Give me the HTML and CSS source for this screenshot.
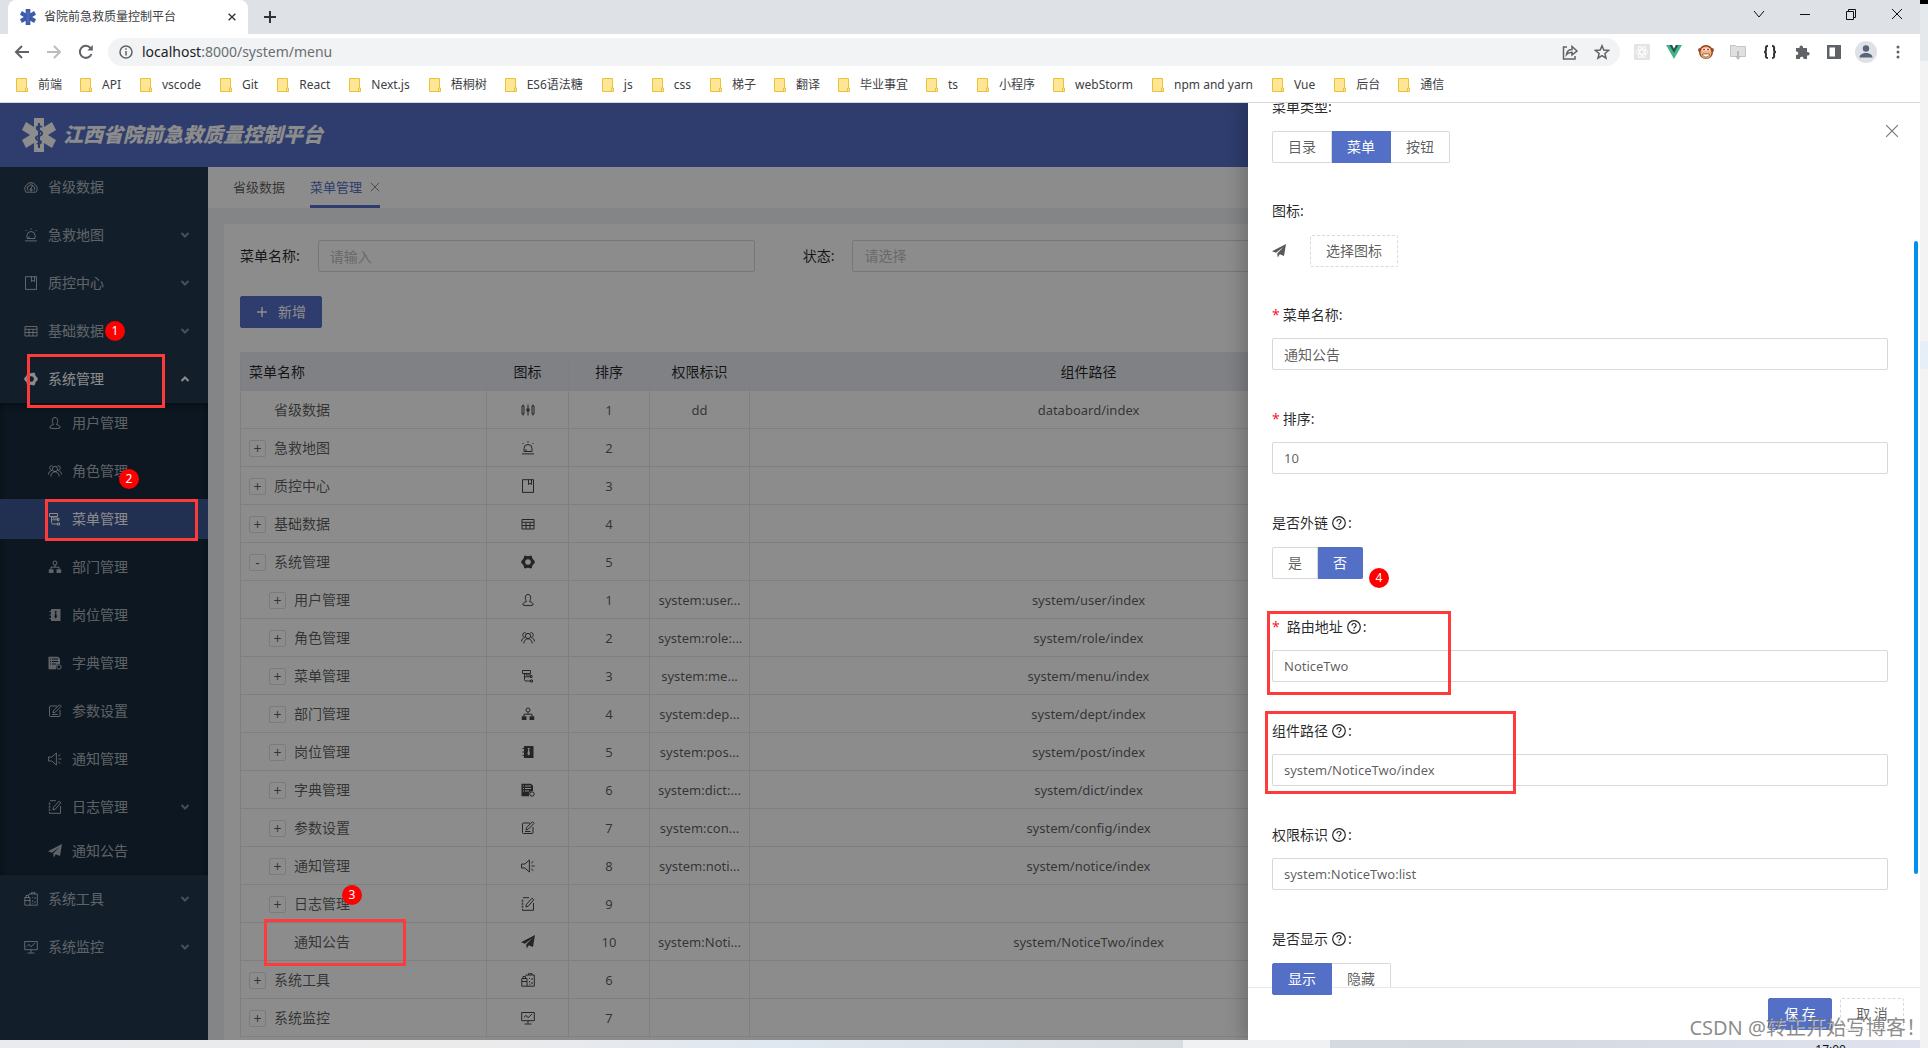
FILE: index.html
```
<!DOCTYPE html>
<html lang="zh-CN">
<head>
<meta charset="utf-8">
<title>省院前急救质量控制平台</title>
<link rel="stylesheet" href="styles.css">
</head>
<body>
<svg class="sprite" aria-hidden="true">
  <symbol id="i-star" viewBox="0 0 34 34"><path fill="currentColor" d="M12 0h10v9l8-5 4 8-8 5 8 5-4 8-8-5v9H12v-9l-8 5-4-8 8-5-8-5 4-8 8 5z"/><path class="snake" d="M17 5v25M20 9c-3-2-6 0-5 2s6 2 5 5-6 1-6 4 5 2 5 4-3 2-4 1"/></symbol>
  <symbol id="i-gauge" viewBox="0 0 14 14"><path d="M2 12.2A6 6 0 1 1 12 12.2zM4 10.500a3.600 3.600 0 1 1 6 0M6.400 9.500l2.200-4M7 9a1 1 0 1 0 .1 0M3.500 6.500l.6.400M7 3.500v.800"/></symbol>
  <symbol id="i-candle" viewBox="0 0 14 14"><path d="M1 3h2v8H1zM11 3h2v8h-2zM2 1.500V3M2 11v1.500M12 1.500V3M12 11v1.500M7 1.500v11"/><path class="solid" d="M5.500 5.500h3v3h-3z"/></symbol>
  <symbol id="i-alert" viewBox="0 0 14 14"><path d="M3 10.500V7.500a4 4 0 0 1 8 0v3zM1 12.900h12M7 .2v1.500M1.500 2l1 1M12.500 2l-1 1M5 10.500V8.200"/></symbol>
  <symbol id="i-book" viewBox="0 0 14 14"><path d="M1.500.700h11v12.700h-11zM7.500.700v4.800L9 4.300l1.500 1.200V.700"/></symbol>
  <symbol id="i-table" viewBox="0 0 14 14"><path d="M1 2.500h12v9.500H1zM1 5.300h12M1 8.500h12M5 5.300V12M9 5.300V12"/></symbol>
  <symbol id="i-gear" viewBox="0 0 14 14"><path class="solid" fill-rule="evenodd" d="M4 .5l3 .8 3-.8 1 .9.5 2.400L13.700 6v2l-2.200 2.200-.5 2.400-1 .9-3-.8-3 .8-1-.9-.5-2.400L.3 8V6l2.200-2.200L3 1.400zM7 4.200a2.800 2.800 0 1 0 0 5.600 2.800 2.800 0 0 0 0-5.600z"/></symbol>
  <symbol id="i-user" viewBox="0 0 14 14"><path d="M5.500 8.500C3.700 6 3.800 1.500 7 1.500S10.300 6 8.500 8.500C11 9.300 12 9.800 12 12c-2 .8-8 .8-10 0 0-2.200 1-2.700 3.500-3.500z"/></symbol>
  <symbol id="i-team" viewBox="0 0 14 14"><circle cx="7" cy="5" r="2.600"/><path d="M2.800 12.500c0-2.800 1.700-4.300 4.200-4.800 2.500.5 4.200 2 4.200 4.800M4.800 2.200C2.800.8.8 3 2.300 5.500c.3.500.8.900 1.500 1C1.500 7.300.5 8.500.5 10.500M9.200 2.200c2-1.400 4 .8 2.500 3.300-.3.500-.8.900-1.500 1 2.300.8 3.300 2 3.300 4"/></symbol>
  <symbol id="i-tree" viewBox="0 0 14 14"><path d="M1.500 1.500h8v3h-8zM3.500 4.500V10.500A1.500 1.500 0 0 0 5 12h4.500M3.500 7.800h6"/><path d="M9.500 6.500h1.500v2H9.500zM9.500 11h2v2h-2zM5 4.500V6h5"/></symbol>
  <symbol id="i-dept" viewBox="0 0 14 14"><circle cx="7" cy="3" r="2"/><path d="M7 5v2.200M3 9V7.200h8V9"/><path class="solid" d="M.8 9.200h4.700v3.800H.8zM8.500 9.200h4.700v3.800H8.500z"/></symbol>
  <symbol id="i-post" viewBox="0 0 14 14"><path class="solid" fill-rule="evenodd" d="M3 1h9.500v12H3v-2H1.500v-1H3V7.500H1.500v-1H3V4H1.500V3H3zM6.500 3l.8 1.500-.9 4.500 1.300 1.500L9 9l-.9-4.500L9 3z"/></symbol>
  <symbol id="i-dict" viewBox="0 0 14 14"><path class="solid" fill-rule="evenodd" d="M.5.800H10l2 2V8h-2l-2 2v3.200H.5zM2 2.500v1h1v-1zM4 2.500v1h6v-1zM2 5v1h1V5zM4 5v1h6V5zM2 7.500v1h1v-1zM4 7.500v1h4v-1z"/><circle cx="11" cy="11" r="2.200"/></symbol>
  <symbol id="i-edit" viewBox="0 0 14 14"><path d="M9 2H2.500a1 1 0 0 0-1 1v8.500a1 1 0 0 0 1 1H11a1 1 0 0 0 1-1V6M5 9l.5-2.500L11.500.800l1.500 1.500L7.500 8zM4 10.500h5.500"/></symbol>
  <symbol id="i-sound" viewBox="0 0 14 14"><path d="M.6 5h3.200L8.400 1v12L3.800 9H.6zM10.500 7H13.500M10.300 4l2-1.500M10.300 10l2 1.500"/></symbol>
  <symbol id="i-log" viewBox="0 0 14 14"><path d="M8 .7H2M1.500 2.500v1M1.500 5.500v1M1.500 8.500v1M1.500 11.800v1.500h11V6M.5 4h2M.5 7h2M.5 10h2M5 10l.4-2.600L11 1.200l1.800 1.600L7.400 9z"/></symbol>
  <symbol id="i-send" viewBox="0 0 14 14"><path class="solid" d="M14 0L12 12 7.800 10.200 5.800 13.500 5.200 9.500 11.500 3 4 8.700 0 7.200z"/></symbol>
  <symbol id="i-tool" viewBox="0 0 14 14"><path d="M.8 5.500H6v7.700H.8zM.8 8.500H6M2 5.500V3.500h2.500v2M5 3V2h8.300v11.200H6M7.500 2V.7H11V2M8.500 5v1M11 5v2M8.500 8v1.500M11 9v2M8.500 11.300h1"/></symbol>
  <symbol id="i-monitor" viewBox="0 0 14 14"><path d="M.7 1.500h12.600v8.200H.7zM7 9.700v3M3.500 13h7M3 6.300l2-2 2 2.500 4-3.800"/></symbol>
  <symbol id="i-help" viewBox="0 0 14 14"><circle cx="7" cy="7" r="6.300"/><path d="M5 5.500C5 2.800 9 2.900 9 5.400 9 7 7 6.900 7 8.500M7 9.700v1.200"/></symbol>
  <symbol id="i-down" viewBox="0 0 10 10"><path class="thick" d="M1.500 3L5 6.500 8.500 3"/></symbol>
  <symbol id="i-up" viewBox="0 0 10 10"><path class="thick" d="M1.500 7L5 3.500 8.500 7"/></symbol>
  <symbol id="i-x" viewBox="0 0 12 12"><path d="M1 1l10 10M11 1L1 11"/></symbol>
  <symbol id="i-folder" viewBox="0 0 12 14"><path fill="#ffe694" stroke="#e8c23c" d="M.5.500h10v9.500h1v3.500H.5zM9.500 13.500v-3.500h1"/></symbol>
</svg>

<div class="desktop">
<div class="window">
  <header class="chrome">
    <div class="tabstrip">
      <div class="tab">
        <svg class="s16 favicon"><use href="#i-star"/></svg>
        <span class="tab-title">省院前急救质量控制平台</span>
        <button class="plain" aria-label="关闭标签页"><svg class="ic s8 bold"><use href="#i-x"/></svg></button>
      </div>
      <button class="plain newtab" aria-label="新标签页"><svg class="ic s12 bold" viewBox="0 0 12 12"><path d="M6 0v12M0 6h12"/></svg></button>
      <div class="winctl">
        <button class="plain" aria-label="搜索标签页"><svg class="ic s12" viewBox="0 0 12 12"><path d="M1 3l5 6 5-6"/></svg></button>
        <button class="plain" aria-label="最小化"><svg class="ic s12" viewBox="0 0 12 12"><path d="M1 6.500h10"/></svg></button>
        <button class="plain" aria-label="还原"><svg class="ic s12" viewBox="0 0 12 12"><path d="M1.500 3.500h7v8h-7zM3.500 3.500v-2h7v8h-2"/></svg></button>
        <button class="plain" aria-label="关闭"><svg class="ic s12"><use href="#i-x"/></svg></button>
      </div>
    </div>
    <div class="toolbar">
      <button class="plain tb" aria-label="后退"><svg class="ic s16 bold" viewBox="0 0 16 16"><path d="M15 8H2M8 2L2 8l6 6"/></svg></button>
      <button class="plain tb off" aria-label="前进"><svg class="ic s16 bold" viewBox="0 0 16 16"><path d="M1 8h13M8 2l6 6-6 6"/></svg></button>
      <button class="plain tb" aria-label="刷新"><svg class="ic s16 bold" viewBox="0 0 16 16"><path d="M13.500 10A6 6 0 1 1 12.500 4"/><path class="solid" d="M14.800 1v5.500H9.300z"/></svg></button>
      <div class="omnibox">
        <svg class="ic s14 mid" viewBox="0 0 14 14"><circle cx="7" cy="7" r="6"/><path d="M7 6v4.500M7 3.300v1.400"/></svg>
        <a class="url" href="#"><b>localhost</b>:8000/system/menu</a>
        <button class="plain tb" aria-label="分享"><svg class="ic s16 mid" viewBox="0 0 16 16"><path d="M5 3H1.500v12H13v-3M4.500 10.500C5 7 7 5.500 10 5.500V2.500l5 4.500-5 4V8.200c-2.500 0-4 .5-5.500 2.300z"/></svg></button>
        <button class="plain tb" aria-label="收藏"><svg class="ic s16 mid" viewBox="0 0 16 16"><path d="M8 1.800l1.800 4.300 4.700.400-3.600 3 1.100 4.600L8 11.700l-4 2.400 1.100-4.600-3.600-3 4.700-.4z"/></svg></button>
      </div>
      <div class="exts">
        <button class="plain tb" aria-label="React"><svg class="s16" viewBox="0 0 16 16"><path fill="#e4e4e4" d="M0 0h16v16H0z"/><g fill="none" stroke="#fff"><ellipse cx="8" cy="8" rx="6" ry="2.300"/><ellipse cx="8" cy="8" rx="6" ry="2.300" transform="rotate(60 8 8)"/><ellipse cx="8" cy="8" rx="6" ry="2.300" transform="rotate(120 8 8)"/></g></svg></button>
        <button class="plain tb" aria-label="Vue"><svg class="s16" viewBox="0 0 16 16"><path fill="#41b883" d="M0 1h6l2 4 2-4h6L8 15z"/><path fill="#35495e" d="M3.500 1H6l2 4 2-4h2.500L8 9z"/></svg></button>
        <button class="plain tb" aria-label="Tampermonkey"><svg class="s16" viewBox="0 0 16 16"><circle cx="2" cy="6" r="2" fill="#a4552c"/><circle cx="14" cy="6" r="2" fill="#a4552c"/><circle cx="8" cy="8" r="7" fill="#8f431f"/><ellipse cx="8" cy="8.500" rx="5.500" ry="6" fill="#f2b47c"/><circle cx="6" cy="5.500" r="1.800" fill="#fff"/><circle cx="10" cy="5.500" r="1.800" fill="#fff"/><circle cx="6" cy="5.500" r="1" fill="#c11"/><circle cx="10" cy="5.500" r="1" fill="#c11"/><path fill="#fff" stroke="#5a2a10" stroke-width=".6" d="M4.500 10h7c0 4-7 4-7 0z"/></svg></button>
        <button class="plain tb" aria-label="下载"><svg class="s16" viewBox="0 0 16 16"><path fill="#e0e0e0" stroke="#c4c4c4" d="M.5 1.500h5l1 1h9v10H.5z"/><path fill="#bbb" d="M7 7h2v5h2l-3 4-3-4h2z"/></svg></button>
        <button class="plain tb" aria-label="JSON"><svg class="ic s16 dark" viewBox="0 0 16 16"><path d="M6 2C3 2 4 4 4 6c0 1-.5 2-2 2 1.500 0 2 1 2 2 0 2-1 4 2 4M10 2c3 0 2 2 2 4 0 1 .5 2 2 2-1.500 0-2 1-2 2 0 2 1 4-2 4"/></svg></button>
        <button class="plain tb" aria-label="扩展程序"><svg class="ic s16" viewBox="0 0 16 16"><path class="solid" d="M2 4h3.500C5 .5 9.500.500 9 4h4v4c3.500-.5 3.500 4 0 3.500V15H9.500c.5-3-4-3-3.500 0H2v-4c3 .5 3-4 0-3.500z"/></svg></button>
        <button class="plain tb" aria-label="侧边栏"><svg class="ic s16" viewBox="0 0 16 16"><path class="solid" fill-rule="evenodd" d="M1 1h14v14H1zM3.500 3.500v9H9v-9z"/></svg></button>
        <button class="plain tb" aria-label="用户"><svg class="s22" viewBox="0 0 22 22"><circle cx="11" cy="11" r="11" fill="#dee1e6"/><g fill="#59637a"><circle cx="11" cy="7.500" r="3.200"/><path d="M4.500 16.500c0-6 13-6 13 0z"/></g></svg></button>
        <button class="plain tb" aria-label="菜单"><svg class="s16" viewBox="0 0 16 16" fill="#5f6368"><circle cx="8" cy="3" r="1.500"/><circle cx="8" cy="8" r="1.500"/><circle cx="8" cy="13" r="1.500"/></svg></button>
      </div>
    </div>
    <nav class="bookmarks">
      <a href="#"><svg><use href="#i-folder"/></svg>前端</a>
      <a class="en" href="#"><svg><use href="#i-folder"/></svg>API</a>
      <a class="en" href="#"><svg><use href="#i-folder"/></svg>vscode</a>
      <a class="en" href="#"><svg><use href="#i-folder"/></svg>Git</a>
      <a class="en" href="#"><svg><use href="#i-folder"/></svg>React</a>
      <a class="en" href="#"><svg><use href="#i-folder"/></svg>Next.js</a>
      <a href="#"><svg><use href="#i-folder"/></svg>梧桐树</a>
      <a class="en" href="#"><svg><use href="#i-folder"/></svg>ES6语法糖</a>
      <a class="en" href="#"><svg><use href="#i-folder"/></svg>js</a>
      <a class="en" href="#"><svg><use href="#i-folder"/></svg>css</a>
      <a href="#"><svg><use href="#i-folder"/></svg>梯子</a>
      <a href="#"><svg><use href="#i-folder"/></svg>翻译</a>
      <a href="#"><svg><use href="#i-folder"/></svg>毕业事宜</a>
      <a class="en" href="#"><svg><use href="#i-folder"/></svg>ts</a>
      <a href="#"><svg><use href="#i-folder"/></svg>小程序</a>
      <a class="en" href="#"><svg><use href="#i-folder"/></svg>webStorm</a>
      <a class="en" href="#"><svg><use href="#i-folder"/></svg>npm and yarn</a>
      <a class="en" href="#"><svg><use href="#i-folder"/></svg>Vue</a>
      <a href="#"><svg><use href="#i-folder"/></svg>后台</a>
      <a href="#"><svg><use href="#i-folder"/></svg>通信</a>
    </nav>
  </header>

  <div class="app">
    <div class="brand">
      <svg class="logo"><use href="#i-star"/></svg>
      <h1>江西省院前急救质量控制平台</h1>
    </div>
    <div class="layout">
      <nav class="sider">
        <a class="item" href="#"><svg class="ic s14"><use href="#i-gauge"/></svg>省级数据</a>
        <a class="item" href="#"><svg class="ic s14"><use href="#i-alert"/></svg>急救地图<svg class="ic s10 arrow"><use href="#i-down"/></svg></a>
        <a class="item" href="#"><svg class="ic s14"><use href="#i-book"/></svg>质控中心<svg class="ic s10 arrow"><use href="#i-down"/></svg></a>
        <a class="item" href="#"><svg class="ic s14"><use href="#i-table"/></svg>基础数据<svg class="ic s10 arrow"><use href="#i-down"/></svg></a>
        <a class="item open" href="#"><svg class="ic s14"><use href="#i-gear"/></svg>系统管理<svg class="ic s10 arrow"><use href="#i-up"/></svg></a>
        <div class="sub">
          <a class="item" href="#"><svg class="ic s14"><use href="#i-user"/></svg>用户管理</a>
          <a class="item" href="#"><svg class="ic s14"><use href="#i-team"/></svg>角色管理</a>
          <a class="item selected" href="#"><svg class="ic s14"><use href="#i-tree"/></svg>菜单管理</a>
          <a class="item" href="#"><svg class="ic s14"><use href="#i-dept"/></svg>部门管理</a>
          <a class="item" href="#"><svg class="ic s14"><use href="#i-post"/></svg>岗位管理</a>
          <a class="item" href="#"><svg class="ic s14"><use href="#i-dict"/></svg>字典管理</a>
          <a class="item" href="#"><svg class="ic s14"><use href="#i-edit"/></svg>参数设置</a>
          <a class="item" href="#"><svg class="ic s14"><use href="#i-sound"/></svg>通知管理</a>
          <a class="item tight" href="#"><svg class="ic s14"><use href="#i-log"/></svg>日志管理<svg class="ic s10 arrow"><use href="#i-down"/></svg></a>
          <a class="item tight" href="#"><svg class="ic s14"><use href="#i-send"/></svg>通知公告</a>
        </div>
        <a class="item" href="#"><svg class="ic s14"><use href="#i-tool"/></svg>系统工具<svg class="ic s10 arrow"><use href="#i-down"/></svg></a>
        <a class="item" href="#"><svg class="ic s14"><use href="#i-monitor"/></svg>系统监控<svg class="ic s10 arrow"><use href="#i-down"/></svg></a>
      </nav>

      <main class="main">
        <div class="pagetabs">
          <a class="ptab" href="#">省级数据</a>
          <a class="ptab active" href="#">菜单管理<svg class="ic s10"><use href="#i-x"/></svg></a>
        </div>
        <section class="card">
          <form class="search">
            <div class="field"><label for="q-name">菜单名称:</label><input id="q-name" class="box" placeholder="请输入"></div>
            <div class="field"><label for="q-status">状态:</label><select id="q-status" class="box"><option>请选择</option></select></div>
          </form>
          <button class="btn primary add"><svg class="ic s12 mid" viewBox="0 0 12 12"><path d="M6 1v10M1 6h10"/></svg>新增</button>
          <table class="grid">
            <colgroup><col class="c-name"><col class="c-icon"><col class="c-sort"><col class="c-perm"><col><col class="c-rest"></colgroup>
            <thead><tr><th>菜单名称</th><th>图标</th><th>排序</th><th>权限标识</th><th>组件路径</th><th></th></tr></thead>
            <tbody>
              <tr><td><span class="leaf">省级数据</span></td><td><svg class="ic s14"><use href="#i-candle"/></svg></td><td>1</td><td>dd</td><td>databoard/index</td><td></td></tr>
              <tr><td><button class="exp">+</button>急救地图</td><td><svg class="ic s14"><use href="#i-alert"/></svg></td><td>2</td><td></td><td></td><td></td></tr>
              <tr><td><button class="exp">+</button>质控中心</td><td><svg class="ic s14"><use href="#i-book"/></svg></td><td>3</td><td></td><td></td><td></td></tr>
              <tr><td><button class="exp">+</button>基础数据</td><td><svg class="ic s14"><use href="#i-table"/></svg></td><td>4</td><td></td><td></td><td></td></tr>
              <tr><td><button class="exp">-</button>系统管理</td><td><svg class="ic s14"><use href="#i-gear"/></svg></td><td>5</td><td></td><td></td><td></td></tr>
              <tr class="lv1"><td><button class="exp">+</button>用户管理</td><td><svg class="ic s14"><use href="#i-user"/></svg></td><td>1</td><td>system:user...</td><td>system/user/index</td><td></td></tr>
              <tr class="lv1"><td><button class="exp">+</button>角色管理</td><td><svg class="ic s14"><use href="#i-team"/></svg></td><td>2</td><td>system:role:...</td><td>system/role/index</td><td></td></tr>
              <tr class="lv1"><td><button class="exp">+</button>菜单管理</td><td><svg class="ic s14"><use href="#i-tree"/></svg></td><td>3</td><td>system:me...</td><td>system/menu/index</td><td></td></tr>
              <tr class="lv1"><td><button class="exp">+</button>部门管理</td><td><svg class="ic s14"><use href="#i-dept"/></svg></td><td>4</td><td>system:dep...</td><td>system/dept/index</td><td></td></tr>
              <tr class="lv1"><td><button class="exp">+</button>岗位管理</td><td><svg class="ic s14"><use href="#i-post"/></svg></td><td>5</td><td>system:pos...</td><td>system/post/index</td><td></td></tr>
              <tr class="lv1"><td><button class="exp">+</button>字典管理</td><td><svg class="ic s14"><use href="#i-dict"/></svg></td><td>6</td><td>system:dict:...</td><td>system/dict/index</td><td></td></tr>
              <tr class="lv1"><td><button class="exp">+</button>参数设置</td><td><svg class="ic s14"><use href="#i-edit"/></svg></td><td>7</td><td>system:con...</td><td>system/config/index</td><td></td></tr>
              <tr class="lv1"><td><button class="exp">+</button>通知管理</td><td><svg class="ic s14"><use href="#i-sound"/></svg></td><td>8</td><td>system:noti...</td><td>system/notice/index</td><td></td></tr>
              <tr class="lv1"><td><button class="exp">+</button>日志管理</td><td><svg class="ic s14"><use href="#i-log"/></svg></td><td>9</td><td></td><td></td><td></td></tr>
              <tr class="lv1"><td><span class="leaf">通知公告</span></td><td><svg class="ic s14"><use href="#i-send"/></svg></td><td>10</td><td>system:Noti...</td><td>system/NoticeTwo/index</td><td></td></tr>
              <tr><td><button class="exp">+</button>系统工具</td><td><svg class="ic s14"><use href="#i-tool"/></svg></td><td>6</td><td></td><td></td><td></td></tr>
              <tr><td><button class="exp">+</button>系统监控</td><td><svg class="ic s14"><use href="#i-monitor"/></svg></td><td>7</td><td></td><td></td><td></td></tr>
            </tbody>
          </table>
        </section>
      </main>
    </div>

    <div class="mask"></div>
    <span class="mark m-system"></span><span class="dot d1">1</span>
    <span class="mark m-menu"></span><span class="dot d2">2</span>
    <span class="mark m-row"></span><span class="dot d3">3</span>

    <aside class="drawer">
      <button class="plain close" aria-label="关闭"><svg class="ic s14"><use href="#i-x"/></svg></button>
      <form class="body">
        <div class="row" role="radiogroup" aria-label="菜单类型">
          <span class="lab">菜单类型:</span>
          <div class="radios">
            <label><input type="radio" name="type">目录</label><label><input type="radio" name="type" checked>菜单</label><label><input type="radio" name="type">按钮</label>
          </div>
        </div>
        <div class="row">
          <span class="lab">图标:</span>
          <div class="pick"><svg class="ic s14"><use href="#i-send"/></svg><button type="button" class="btn dashed">选择图标</button></div>
        </div>
        <div class="row"><label class="lab" for="f-name"><i>*</i>菜单名称:</label><input class="box" id="f-name" value="通知公告"></div>
        <div class="row"><label class="lab" for="f-sort"><i>*</i>排序:</label><input class="box latin" id="f-sort" value="10"></div>
        <div class="row" role="radiogroup" aria-label="是否外链">
          <span class="lab">是否外链<svg class="ic s14"><use href="#i-help"/></svg>:</span>
          <div class="radios">
            <label><input type="radio" name="link">是</label><label><input type="radio" name="link" checked>否</label>
          </div>
        </div>
        <div class="row"><label class="lab" for="f-route"><i class="wide">*</i>路由地址<svg class="ic s14"><use href="#i-help"/></svg>:</label><input class="box latin" id="f-route" value="NoticeTwo"></div>
        <div class="row"><label class="lab" for="f-comp">组件路径<svg class="ic s14"><use href="#i-help"/></svg>:</label><input class="box latin" id="f-comp" value="system/NoticeTwo/index"></div>
        <div class="row"><label class="lab" for="f-perm">权限标识<svg class="ic s14"><use href="#i-help"/></svg>:</label><input class="box latin" id="f-perm" value="system:NoticeTwo:list"></div>
        <div class="row" role="radiogroup" aria-label="是否显示">
          <span class="lab">是否显示<svg class="ic s14"><use href="#i-help"/></svg>:</span>
          <div class="radios">
            <label><input type="radio" name="show" checked>显示</label><label><input type="radio" name="show">隐藏</label>
          </div>
        </div>
      </form>
      <div class="foot"><button class="btn primary">保 存</button><button class="btn dashed">取 消</button></div>
      <div class="thumb"></div>
      <span class="dot d4">4</span>
      <span class="mark m-route"></span>
      <span class="mark m-comp"></span>
      <span class="watermark">CSDN @转正开始写博客！</span>
    </aside>
  </div>
  <footer class="taskbar"><span class="active-app"></span><span class="clock">17:00</span></footer>
</div>
<div class="behind"><span class="hl"></span></div>
</div>
</body>
</html>
```
FILE: styles.css
```
* { box-sizing: border-box; }
body {
  margin: 0;
  font: 14px/22px "Noto Sans", "Noto Sans CJK SC", sans-serif;
  color: rgba(0, 0, 0, .65);
  background: #fff;
}
a { color: inherit; text-decoration: none; }
button, input, select { font: inherit; color: inherit; margin: 0; }
.sprite { position: absolute; width: 0; height: 0; }
.ic { fill: none; stroke: currentColor; stroke-width: 1; flex: none; }
.solid { fill: currentColor; stroke: none; }
.thick { stroke-width: 2; }
.mid { stroke-width: 1.5; }
.bold { stroke-width: 2; }
.dark { stroke: #333; stroke-width: 2; }
.snake { fill: none; stroke: #5470c6; stroke-width: 2; }
.s8 { width: 8px; height: 8px; }
.s10 { width: 10px; height: 10px; }
.s12 { width: 12px; height: 12px; }
.s14 { width: 14px; height: 14px; }
.s16 { width: 16px; height: 16px; }
.s22 { width: 22px; height: 22px; }
.plain {
  display: flex; align-items: center; justify-content: center;
  padding: 0; border: 0; background: none; color: #333;
}

.desktop { display: flex; height: 100vh; }
.window { flex: 1; min-width: 0; display: flex; flex-direction: column; }
.behind { width: 8px; border-top: 4px solid #000; background: linear-gradient(#e6e9ec 57px, #f3f3f3 57px); }
.hl { display: block; height: 28px; margin-top: 337px; background: #e6eef7; }

/* browser chrome */
.chrome { flex: none; border-bottom: 1px solid #d5d7da; }
.tabstrip { display: flex; height: 34px; padding-left: 8px; background: #dee1e6; }
.tab {
  display: flex; align-items: center; width: 240px; padding: 0 12px;
  background: #fff; border-radius: 8px 8px 0 0;
  font-size: 12px; color: #3c4043;
}
.favicon { color: #3f5ba8; }
.favicon .snake { stroke: #fff; }
.tab-title { flex: 1; margin-left: 8px; }
.newtab { width: 44px; }
.winctl { display: flex; margin-left: auto; }
.winctl button { width: 46px; height: 28px; color: #111; }
.toolbar { display: flex; align-items: center; height: 36px; padding: 0 6px; }
.tb { width: 32px; height: 28px; color: #5f6368; }
.tb.off { color: #bbbdc0; }
.omnibox {
  flex: 1; display: flex; align-items: center; height: 28px;
  margin-left: 6px; padding: 0 2px 0 11px; border-radius: 14px;
  background: #f1f3f4; color: #5f6368;
}
.url { flex: 1; margin-left: 9px; color: #6a6e73; }
.url b { font-weight: 400; color: #202124; }
.exts { display: flex; margin-left: 6px; }
.bookmarks { display: flex; gap: 18px; height: 32px; padding: 0 16px 2px; align-items: center; font-size: 12px; color: #3c4043; }
.bookmarks a { display: flex; align-items: center; gap: 10px; white-space: nowrap; }
.bookmarks .en { padding-right: 1px; }
.bookmarks svg { width: 12px; height: 14px; }

/* application shell */
.app { flex: 1; min-height: 0; position: relative; overflow: hidden; display: flex; flex-direction: column; background: #f0f2f5; }
.brand { flex: none; display: flex; align-items: center; gap: 7px; height: 64px; padding-left: 22px; background: #5470c6; color: #fff; }
.logo { width: 34px; height: 34px; }
.brand h1 { margin: 0; font-size: 20px; font-style: italic; font-weight: 900; }
.layout { flex: 1; min-height: 0; display: flex; }
.sider { flex: none; width: 208px; background: #22384e; color: rgba(255, 255, 255, .65); }
.item { display: flex; align-items: center; gap: 10px; height: 40px; margin-bottom: 8px; padding: 0 18px 0 24px; }
.item.open { margin-bottom: 4px; color: #fff; }
.item.tight { margin-bottom: 4px; }
.item.selected { background: #3d5693; color: #fff; }
.arrow { margin-left: auto; opacity: .7; }
.open .arrow { opacity: 1; }
.sub { overflow: hidden; margin-bottom: 4px; background: #192b3d; box-shadow: inset 0 2px 8px rgba(0, 0, 0, .45); }
.sub .item { padding-left: 48px; }

.main { flex: 1; min-width: 0; }
.pagetabs { display: flex; gap: 25px; height: 41px; padding-left: 25px; background: #fff; font-size: 13px; }
.ptab { display: flex; align-items: center; gap: 8px; border-bottom: 3px solid transparent; padding-top: 2px; }
.ptab.active { color: #5470c6; border-color: #5470c6; }
.ptab svg { color: #777; }
.card { margin: 16px 16px 0; padding: 16px 16px 24px; background: #fff; }
.search { display: grid; grid-template-columns: repeat(3, 1fr); gap: 48px; padding-right: 8px; }
.field { display: flex; align-items: center; color: rgba(0, 0, 0, .85); }
.field label { margin-right: 18px; white-space: nowrap; }
.box {
  flex: 1; min-width: 0; width: 100%; height: 32px; padding: 0 11px;
  border: 1px solid #d9d9d9; border-radius: 2px; background: #fff;
  color: rgba(0, 0, 0, .65); appearance: none;
}
.box::placeholder, select.box { color: #bfbfbf; }
.box.latin { font-size: 13px; }
.btn {
  display: inline-flex; align-items: center; justify-content: center; gap: 10px;
  height: 32px; padding: 0 15px; border: 1px solid #d9d9d9; border-radius: 2px; background: #fff;
}
.btn.primary { background: #5470c6; border-color: #5470c6; color: #fff; }
.btn.dashed { border-style: dashed; }
.add { display: flex; width: 82px; margin: 24px 0; padding: 0; }
.grid { width: 100%; table-layout: fixed; border-collapse: collapse; }
.c-name { width: 246px; }
.c-icon { width: 82px; }
.c-sort { width: 81px; }
.c-perm { width: 100px; }
.c-rest { width: 460px; }
.grid th, .grid td { height: 38px; padding: 0 8px; border: 1px solid #e8e8e8; text-align: center; white-space: nowrap; }
.grid th { background: #e9ebf2; color: rgba(0, 0, 0, .85); font-weight: 400; }
.grid td { font-size: 13px; }
.grid th:first-child, .grid td:first-child { text-align: left; font-size: 14px; }
.grid .lv1 td:first-child { padding-left: 28px; }
.grid svg { display: block; margin: auto; color: #444; }
.exp {
  width: 17px; height: 17px; margin-right: 8px; padding: 0; vertical-align: -1px;
  border: 1px solid #e0e0e0; border-radius: 2px; background: #fff; line-height: 15px;
}
.leaf { margin-left: 25px; }

.mask { position: absolute; inset: 0; background: rgba(0, 0, 0, .45); }

/* drawer */
.drawer { position: absolute; top: 0; right: 0; bottom: 0; width: 35%; background: #fff; box-shadow: -6px 0 16px rgba(0, 0, 0, .2); }
.close { position: absolute; top: 20px; right: 20px; width: 16px; height: 16px; color: #777; z-index: 2; }
.body { height: 100%; overflow: hidden; padding: 0 32px 0 24px; }
.row { display: flex; flex-direction: column; height: 104px; }
.row:first-child { margin-top: -7px; }
.lab { display: flex; align-items: center; margin-bottom: 12px; color: rgba(0, 0, 0, .85); }
.lab i { margin-right: 3px; color: #f5222d; font-style: normal; }
.lab i.wide { margin-right: 7px; }
.lab svg { margin: 0 2px 0 4px; stroke-width: 1.2; }
.row .box { flex: none; }
.radios { display: flex; margin-top: 1px; }
.radios label {
  height: 32px; padding: 4px 15px 0; border: 1px solid #d9d9d9; border-left-width: 0;
}
.radios label:first-child { border-left-width: 1px; border-radius: 2px 0 0 2px; }
.radios label:last-child { border-radius: 0 2px 2px 0; }
.radios label:has(:checked) { position: relative; z-index: 2; background: #5470c6; border-color: #5470c6; color: #fff; }
.radios input { position: absolute; width: 1px; height: 1px; opacity: 0; }
.pick { display: flex; align-items: center; gap: 24px; margin-top: 1px; }
.foot {
  position: absolute; left: 0; right: 0; bottom: 0; z-index: 1;
  display: flex; justify-content: flex-end; gap: 8px; padding: 10px 16px;
  border-top: 1px solid #e8e8e8; background: #fff;
}
.foot .btn { width: 64px; padding: 0; }
.thumb { position: absolute; top: 138px; right: 2px; width: 4px; height: 633px; border-radius: 2px; background: #0090ee; z-index: 2; }

/* walkthrough annotations */
.mark { position: absolute; z-index: 3; border: 3px solid #ff3a3a; }
.dot {
  position: absolute; z-index: 4; width: 20px; height: 20px; border-radius: 50%;
  background: #f00; color: #fff; font-size: 12px; line-height: 20px; text-align: center;
}
.m-system { left: 27px; top: 251px; width: 138px; height: 54px; }
.m-menu { left: 45px; top: 396px; width: 153px; height: 42px; }
.m-row { left: 264px; top: 816px; width: 142px; height: 47px; }
.m-route { left: 19px; top: 508px; width: 184px; height: 84px; }
.m-comp { left: 17px; top: 608px; width: 251px; height: 83px; }
.d1 { left: 105px; top: 218px; }
.d2 { left: 119px; top: 366px; }
.d3 { left: 342px; top: 782px; }
.d4 { left: 121px; top: 465px; }
.watermark {
  position: absolute; right: -6px; bottom: 0; z-index: 3;
  font-size: 20px; line-height: 24px; white-space: nowrap;
  color: rgba(110, 110, 110, .8); text-shadow: 1px 1px 0 rgba(255, 255, 255, .6);
}

.taskbar {
  flex: none; display: flex; height: 8px; overflow: hidden; padding: 0 74px 0 1183px;
  justify-content: space-between;
  background: linear-gradient(90deg, #e9ebee, #ecebec 25%, #dfe7f0 40%, #d8dde2 60%, #d3d9df 75%, #dfe2ee);
}
.active-app { width: 147px; background: #f0f1f2; }
.clock { font-size: 12px; line-height: 16px; padding-top: 2px; color: #111; }
```
